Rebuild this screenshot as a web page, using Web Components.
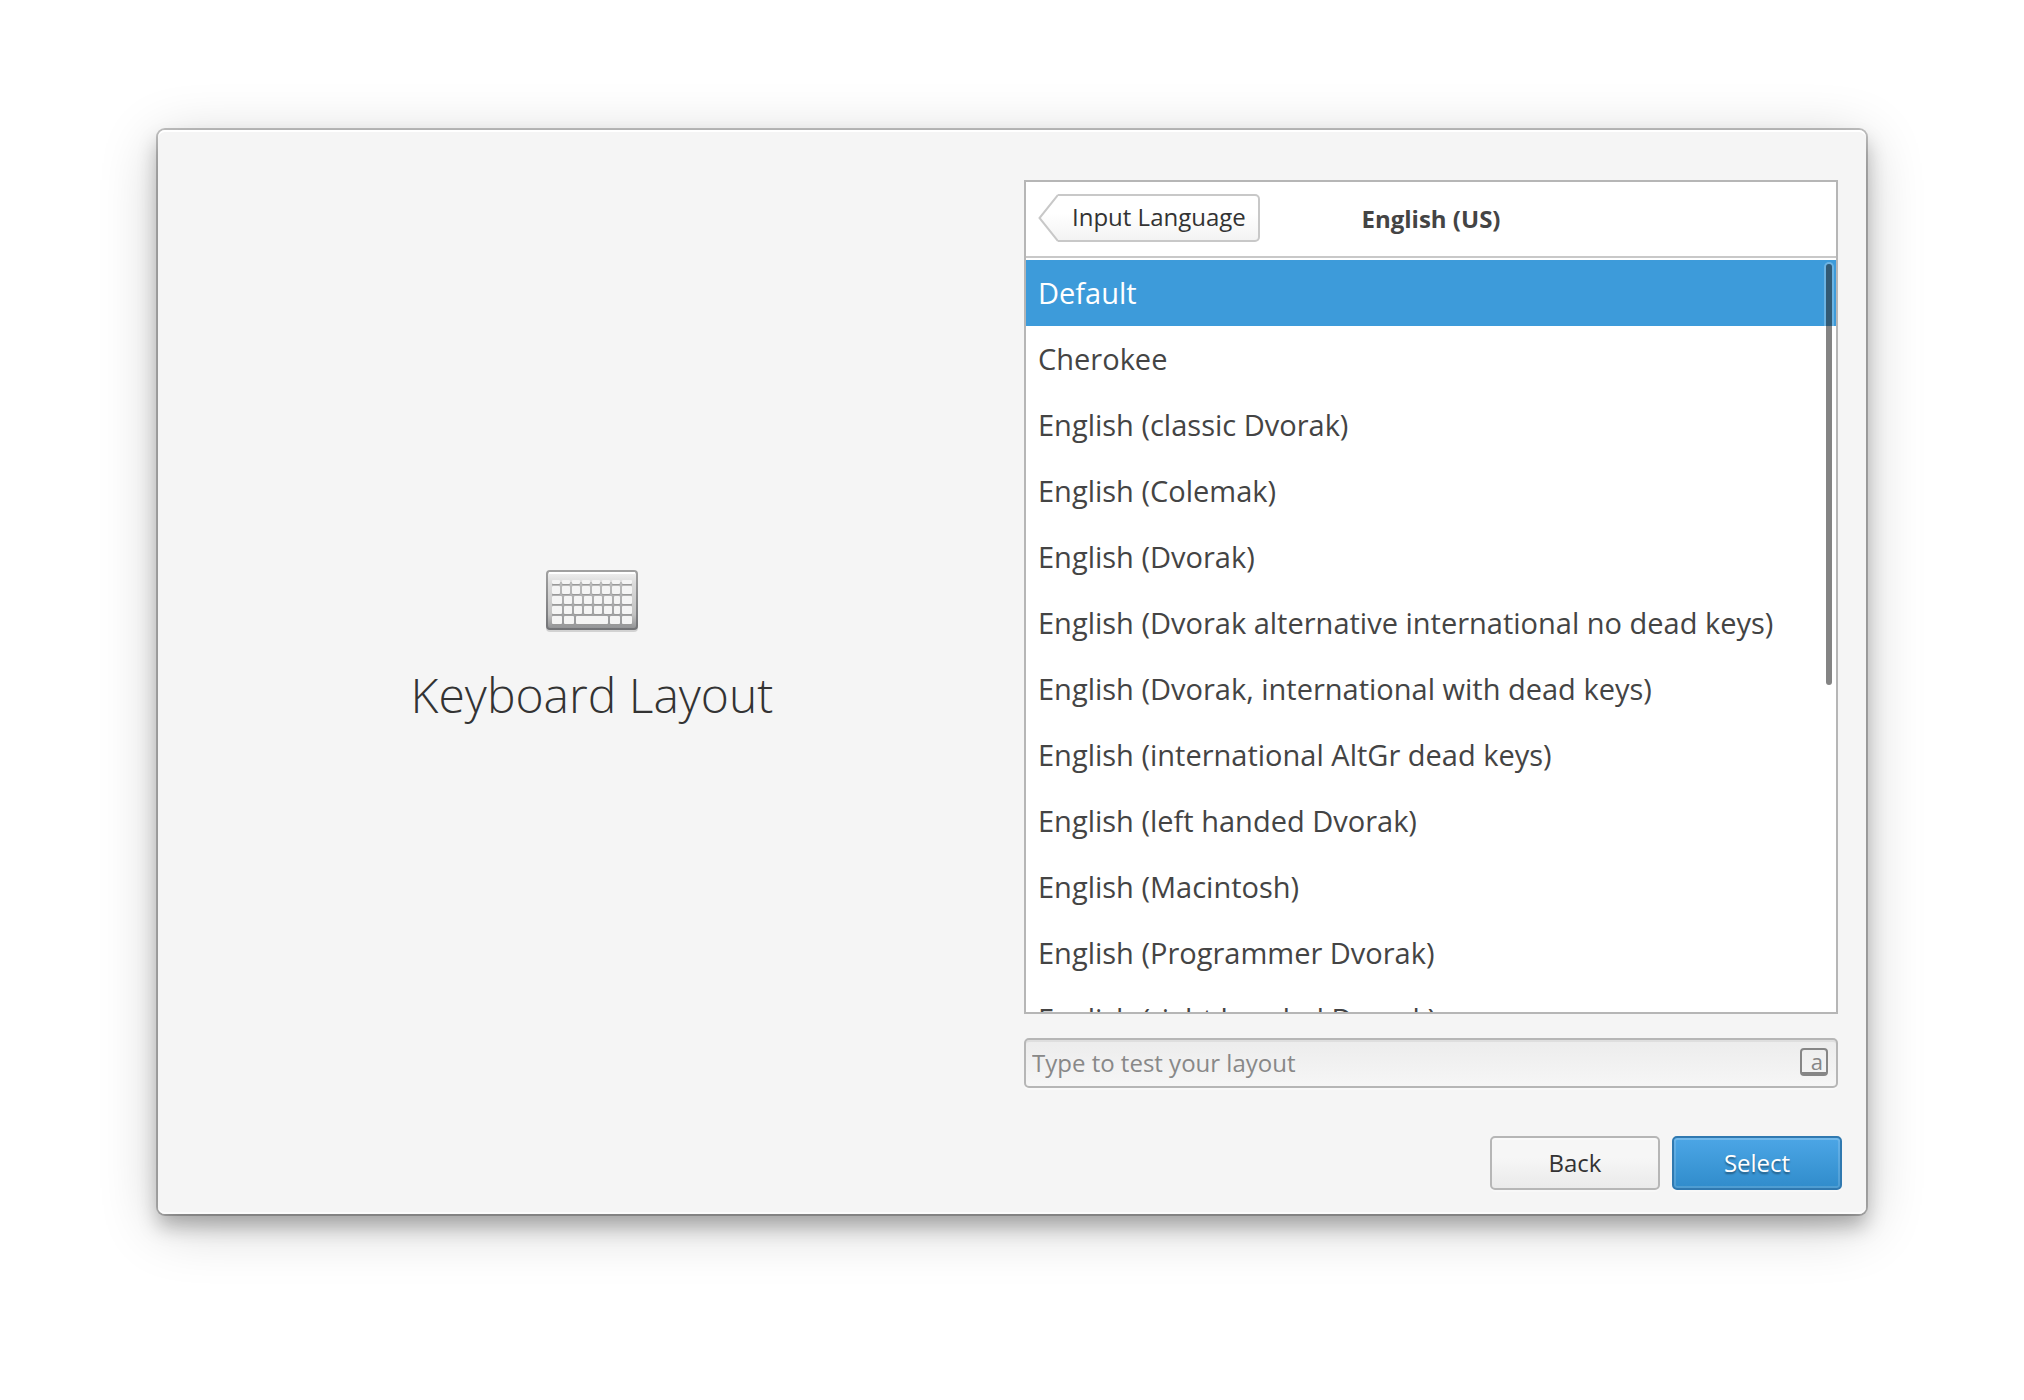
<!DOCTYPE html>
<html lang="en">
<head>
<meta charset="utf-8">
<title>Keyboard Layout</title>
<style>
  body {
    margin: 0;
    min-height: 100vh;
    box-sizing: border-box;
    padding: 130px 158px 186px;
    display: flex;
    background: #fff;
    color: #333;
    font: 24px/32px "Open Sans", sans-serif;
  }
  setup-window { flex: 1; }
</style>
</head>
<body>
<setup-window>
  <setup-heading slot="heading">Keyboard Layout</setup-heading>
  <layout-picker slot="content" back="Input Language" heading="English (US)"></layout-picker>
  <test-entry slot="content" placeholder="Type to test your layout"></test-entry>
  <push-button slot="actions">Back</push-button>
  <push-button slot="actions" suggested>Select</push-button>
</setup-window>

<script>
class SetupWindow extends HTMLElement {
  constructor() {
    super();
    this.attachShadow({ mode: "open" }).innerHTML = `
      <style>
        :host {
          display: flex;
          flex-direction: column;
          box-sizing: border-box;
          padding: 50px 24px 24px 26px;
          border-radius: 7px;
          background: #f5f5f5;
          box-shadow:
            inset 0 2px #fff,
            inset 0 -2px #fbfbfb,
            0 0 0 2px rgba(0, 0, 0, .23),
            0 12px 20px rgba(0, 0, 0, .27),
            0 12px 60px rgba(0, 0, 0, .2);
        }
        main {
          flex: 1;
          display: grid;
          grid-template-columns: 1fr 1fr;
          gap: 26px;
          padding-right: 4px;
        }
        .heading { display: grid; place-items: center; padding: 28px 0 0 2px; }
        .content { display: flex; flex-direction: column; gap: 24px; }
        footer { display: flex; justify-content: flex-end; gap: 12px; margin-top: 48px; }
      </style>
      <main>
        <div class="heading"><slot name="heading"></slot></div>
        <div class="content"><slot name="content"></slot></div>
      </main>
      <footer><slot name="actions"></slot></footer>`;
  }
}

const KEY_ROWS = [
  [12, 4, [[8, 8], [18, 8], [28, 8], [38, 8], [48, 8], [58, 8], [68, 8], [78, 10]]],
  [18, 8, [[8, 8], [18, 8], [28, 8], [38, 8], [48, 8], [58, 8], [68, 8], [78, 10]]],
  [28, 8, [[8, 10], [20, 8], [30, 8], [40, 8], [50, 8], [60, 8], [70, 6], [78, 10]]],
  [38, 8, [[8, 10], [20, 8], [30, 8], [40, 8], [50, 8], [60, 8], [70, 6], [78, 10]]],
  [48, 8, [[8, 10], [20, 10], [32, 32], [66, 10], [78, 10]]]
];

class SetupHeading extends HTMLElement {
  constructor() {
    super();
    const keys = KEY_ROWS.map(([y, h, row]) => row.map(([x, w]) =>
      `<rect x="${x}" y="${y}" width="${w}" height="${h}" rx="1"/>`).join("")).join("");
    this.attachShadow({ mode: "open" }).innerHTML = `
      <style>
        :host { display: flex; flex-direction: column; align-items: center; gap: 28px; }
        svg { display: block; }
        h1 { margin: 0; font-size: 48px; line-height: 66px; font-weight: 300; }
      </style>
      <svg width="96" height="66" viewBox="0 0 96 66" aria-hidden="true">
        <defs>
          <linearGradient id="body" x1="0" y1="0" x2="0" y2="1">
            <stop offset="0" stop-color="#f2f2f2"/><stop offset=".2" stop-color="#dcdcdc"/>
            <stop offset=".75" stop-color="#c2c2c2"/><stop offset="1" stop-color="#909193"/>
          </linearGradient>
          <linearGradient id="edge" x1="0" y1="0" x2="0" y2="1">
            <stop offset="0" stop-color="#a0a0a0"/><stop offset="1" stop-color="#737477"/>
          </linearGradient>
          <linearGradient id="bed" x1="0" y1="0" x2="0" y2="1">
            <stop offset="0" stop-color="#bcbcbc"/><stop offset="1" stop-color="#98999b"/>
          </linearGradient>
        </defs>
        <rect x="2" y="4" width="92" height="60" rx="4" fill="#000" opacity=".14"/>
        <rect x="3" y="3" width="90" height="58" rx="3" fill="url(#body)" stroke="url(#edge)" stroke-width="2"/>
        <path d="M5 5H91" stroke="#fff" stroke-width="2"/>
        <rect x="8" y="14" width="80" height="44" rx="1" fill="url(#bed)"/>
        <g fill="#999" transform="translate(0 1)">${keys}</g>
        <g fill="#f4f4f4">${keys}</g>
      </svg>
      <h1><slot></slot></h1>`;
  }
}

const VARIANTS = [
  "Default",
  "Cherokee",
  "English (classic Dvorak)",
  "English (Colemak)",
  "English (Dvorak)",
  "English (Dvorak alternative international no dead keys)",
  "English (Dvorak, international with dead keys)",
  "English (international AltGr dead keys)",
  "English (left handed Dvorak)",
  "English (Macintosh)",
  "English (Programmer Dvorak)",
  "English (right handed Dvorak)"
];

class LayoutPicker extends HTMLElement {
  constructor() {
    super();
    this.attachShadow({ mode: "open" }).innerHTML = `
      <style>
        :host {
          flex: 1;
          display: flex;
          flex-direction: column;
          border: 2px solid #b6b6b6;
          background: #fff;
        }
        header {
          display: grid;
          grid-template-columns: 1fr auto 1fr;
          align-items: center;
          padding: 12px 12px 14px;
          border-bottom: 2px solid #c8c8c8;
        }
        back-button { justify-self: start; }
        h2 { margin: 2px 0 0; font: inherit; font-weight: 700; color: #444; }
        .viewport { position: relative; flex: 1 1 0; margin-top: 2px; overflow: hidden; }
        .list { position: absolute; inset: 0; overflow-y: auto; scrollbar-width: none; }
        label {
          display: flex;
          align-items: center;
          height: 66px;
          padding: 0 12px;
          color: #444;
          font-size: 29px;
          white-space: nowrap;
        }
        label:has(:checked) { background: #3d9bda; color: #fff; }
        input { appearance: none; width: 0; height: 0; margin: 0; outline: none; }
        .thumb {
          position: absolute;
          top: 4px;
          right: 4px;
          width: 6px;
          height: 56%;
          border-radius: 3px;
          background: rgba(43, 43, 43, .58);
          box-shadow: 0 0 0 2px rgba(255, 255, 255, .25);
        }
      </style>
      <header><back-button></back-button><h2></h2></header>
      <div class="viewport">
        <div class="list" role="radiogroup" aria-label="Keyboard layout"></div>
        <div class="thumb"></div>
      </div>`;
  }
  connectedCallback() {
    const root = this.shadowRoot;
    root.querySelector("back-button").textContent = this.getAttribute("back");
    root.querySelector("h2").textContent = this.getAttribute("heading");
    root.querySelector(".list").innerHTML = VARIANTS.map((name, i) =>
      `<label><input type="radio" name="variant"${i ? "" : " checked"}>${name}</label>`).join("");
  }
}

class BackButton extends HTMLElement {
  constructor() {
    super();
    this.attachShadow({ mode: "open" }).innerHTML = `
      <style>
        :host { display: block; }
        button {
          display: flex;
          padding: 0;
          border: 0;
          background: none;
          color: inherit;
          font: inherit;
        }
        svg { display: block; }
        span {
          box-sizing: border-box;
          height: 48px;
          padding: 5px 12px 0 14px;
          border: 2px solid #c8c8c8;
          border-left: 0;
          border-radius: 0 5px 5px 0;
          background: linear-gradient(#fff 40%, #f3f3f3);
        }
      </style>
      <button type="button">
        <svg width="20" height="48" viewBox="0 0 20 48" aria-hidden="true">
          <defs><linearGradient id="tip" x1="0" y1="0" x2="0" y2="1">
            <stop offset=".4" stop-color="#fff"/><stop offset="1" stop-color="#f3f3f3"/>
          </linearGradient></defs>
          <path d="M20 1L1.500 24L20 47" fill="url(#tip)" stroke="#c8c8c8" stroke-width="2"/>
        </svg>
        <span><slot></slot></span>
      </button>`;
  }
}

class TestEntry extends HTMLElement {
  constructor() {
    super();
    this.attachShadow({ mode: "open" }).innerHTML = `
      <style>
        :host {
          display: flex;
          align-items: center;
          box-sizing: border-box;
          height: 50px;
          padding: 0 8px 0 6px;
          border: 2px solid #b6b6b6;
          border-radius: 5px;
          background: linear-gradient(#ececec, #f6f6f6);
          box-shadow: inset 0 2px #dedede, 0 2px #f9f9f9;
        }
        input {
          flex: 1;
          min-width: 0;
          padding: 0;
          border: 0;
          outline: 0;
          background: none;
          color: #333;
          font: inherit;
        }
        input::placeholder { color: #888; opacity: 1; }
        .key {
          box-sizing: border-box;
          width: 28px;
          height: 28px;
          padding-right: 3px;
          border: 2px solid #868686;
          border-bottom-width: 4px;
          border-radius: 4px;
          color: #868686;
          font-size: 22px;
          line-height: 22px;
          text-align: right;
          margin-bottom: 2px;
        }
      </style>
      <input type="text" aria-label="Test your layout">
      <div class="key" aria-hidden="true">a</div>`;
  }
  connectedCallback() {
    this.shadowRoot.querySelector("input").placeholder = this.getAttribute("placeholder");
  }
}

class PushButton extends HTMLElement {
  constructor() {
    super();
    this.attachShadow({ mode: "open" }).innerHTML = `
      <style>
        :host { display: block; }
        button {
          display: block;
          box-sizing: border-box;
          min-width: 170px;
          height: 54px;
          padding: 0 16px;
          border: 2px solid #b6b6b6;
          border-radius: 5px;
          background: linear-gradient(#f6f6f6 40%, #eaeaea);
          box-shadow: inset 0 2px #fafafa, 0 2px #f8f8f8;
          color: inherit;
          font: inherit;
        }
        :host([suggested]) button {
          border-color: #3079b0;
          background: linear-gradient(#4ca6e6, #308ccb);
          box-shadow: inset 0 2px #73b9eb, inset 0 0 0 2px rgba(255, 255, 255, .15), 0 2px #f8f8f8;
          color: #fff;
          text-shadow: 0 2px 2px rgba(0, 0, 0, .4);
        }
      </style>
      <button type="button"><slot></slot></button>`;
  }
}

customElements.define("back-button", BackButton);
customElements.define("setup-heading", SetupHeading);
customElements.define("layout-picker", LayoutPicker);
customElements.define("test-entry", TestEntry);
customElements.define("push-button", PushButton);
customElements.define("setup-window", SetupWindow);
</script>
</body>
</html>
